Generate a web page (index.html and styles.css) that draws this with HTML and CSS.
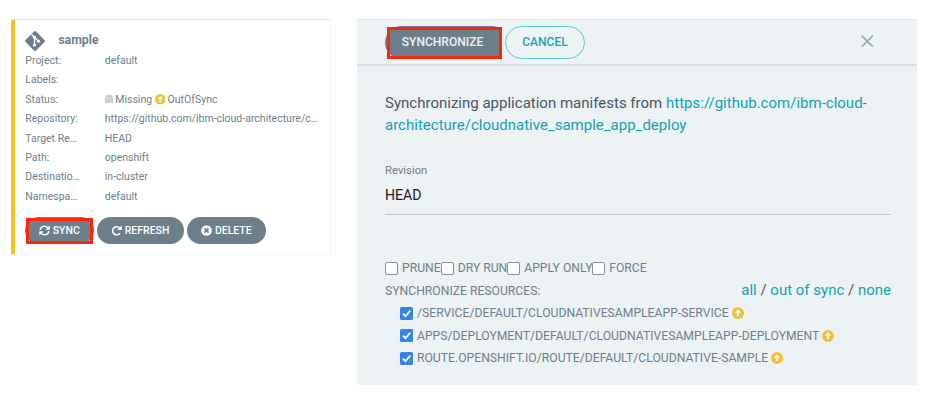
FILE: index.html
```html
<!DOCTYPE html>
<html lang="en">
<head>
<meta charset="utf-8">
<title>Applications</title>
<link rel="stylesheet" href="styles.css">
</head>
<body>
<svg class="defs" width="0" height="0">
  <symbol id="up" viewBox="0 0 16 16"><circle cx="8" cy="8" r="8" fill="#f4c030"/><path d="M8 3 L12.3 7.7 H9.5 V12.4 H6.5 V7.7 H3.7 Z" fill="#fff"/></symbol>
</svg>
<main class="page">
  <section class="card">
    <header class="card-head">
      <svg class="git" viewBox="0 0 20 20"><path d="M8.9.6a1.6 1.6 0 0 1 2.2 0l8.3 8.3a1.6 1.6 0 0 1 0 2.2l-8.3 8.3a1.6 1.6 0 0 1-2.2 0L.6 11.1a1.6 1.6 0 0 1 0-2.2z" fill="#6d7f8b"/><path d="M6.4 3.2 9.5 6.3V14M9.5 6.3 13.5 10.2" fill="none" stroke="#fff" stroke-width="1.3"/><circle cx="9.5" cy="6.3" r="1.6" fill="#fff"/><circle cx="9.5" cy="14" r="1.6" fill="#fff"/><circle cx="13.5" cy="10.2" r="1.6" fill="#fff"/></svg>
      <span class="name">sample</span>
    </header>
    <dl class="facts">
      <dt>Project:</dt><dd>default</dd>
      <dt>Labels:</dt><dd></dd>
      <dt>Status:</dt>
      <dd class="status"><svg class="ghost" viewBox="0 0 16 18"><path d="M0 8a8 8 0 0 1 16 0v10l-2.7-1.4-2.6 1.4L8 16.6 5.3 18l-2.6-1.4L0 18z" fill="#c5d1d9"/><circle cx="5.3" cy="7.5" r="1.2" fill="#fff"/><circle cx="10.7" cy="7.5" r="1.2" fill="#fff"/></svg><span class="missing">Missing</span><svg class="up"><use href="#up"/></svg><span class="oos">OutOfSync</span></dd>
      <dt>Repository:</dt><dd class="repo">https://github.com/ibm-cloud-architecture/c…</dd>
      <dt>Target Re…</dt><dd>HEAD</dd>
      <dt>Path:</dt><dd>openshift</dd>
      <dt>Destinatio…</dt><dd>in-cluster</dd>
      <dt>Namespa…</dt><dd>default</dd>
    </dl>
    <div class="actions">
      <button class="btn sync"><svg viewBox="0 0 16 16"><path d="M1.7 7.2A6.2 6.2 0 0 1 12.6 4M14.3 8.8A6.2 6.2 0 0 1 3.4 12" fill="none" stroke="#fff" stroke-width="2.1"/><path d="M15.6.6V6.8H9.4zM.4 15.4V9.2H6.6z" fill="#fff"/></svg>SYNC<i class="mark"></i></button>
      <button class="btn refresh"><svg viewBox="0 0 16 16"><path d="M12.7 4.4A5.9 5.9 0 1 0 13 11.9" fill="none" stroke="#fff" stroke-width="2.3"/><path d="M15.6.6V7.3H8.9z" fill="#fff"/></svg>REFRESH</button>
      <button class="btn delete"><svg viewBox="0 0 16 16"><circle cx="8" cy="8" r="7.8" fill="#fff"/><path d="M5 5l6 6M11 5l-6 6" stroke="#6d7f8b" stroke-width="2.4"/></svg>DELETE</button>
    </div>
  </section>

  <section class="panel">
    <header class="bar">
      <button class="main-btn">SYNCHRONIZE<i class="mark"></i></button>
      <button class="cancel">CANCEL</button>
      <svg class="close" viewBox="0 0 12 12"><path d="M.6.6 11.4 11.4M11.4.6.6 11.4" stroke="#95a7b5" stroke-width="1.4" fill="none"/></svg>
    </header>
    <div class="body">
      <p class="intro">Synchronizing application manifests from <a>https://github.com/ibm-cloud-<br>architecture/cloudnative_sample_app_deploy</a></p>
      <div class="field"><label>Revision</label><div class="value">HEAD</div></div>
      <div class="options">
        <label class="o1"><i class="box"></i>PRUNE</label><label class="o2"><i class="box"></i>DRY RUN</label><label class="o3"><i class="box"></i>APPLY ONLY</label><label class="o4"><i class="box"></i>FORCE</label>
      </div>
      <div class="res-head"><span>SYNCHRONIZE RESOURCES:</span><span class="links"><a>all</a> / <a>out of sync</a> / <a>none</a></span></div>
      <ul class="res">
        <li><svg class="check" viewBox="0 0 13 13"><rect width="13" height="13" rx="1.6" fill="#3584e4"/><path d="M3 6.6 5.5 9.1 10.3 3.7" stroke="#fff" stroke-width="1.8" fill="none"/></svg><span>/SERVICE/DEFAULT/CLOUDNATIVESAMPLEAPP-SERVICE</span><svg class="up"><use href="#up"/></svg></li>
        <li><svg class="check" viewBox="0 0 13 13"><rect width="13" height="13" rx="1.6" fill="#3584e4"/><path d="M3 6.6 5.5 9.1 10.3 3.7" stroke="#fff" stroke-width="1.8" fill="none"/></svg><span>APPS/DEPLOYMENT/DEFAULT/CLOUDNATIVESAMPLEAPP-DEPLOYMENT</span><svg class="up"><use href="#up"/></svg></li>
        <li><svg class="check" viewBox="0 0 13 13"><rect width="13" height="13" rx="1.6" fill="#3584e4"/><path d="M3 6.6 5.5 9.1 10.3 3.7" stroke="#fff" stroke-width="1.8" fill="none"/></svg><span>ROUTE.OPENSHIFT.IO/ROUTE/DEFAULT/CLOUDNATIVE-SAMPLE</span><svg class="up"><use href="#up"/></svg></li>
      </ul>
    </div>
  </section>
</main>
</body>
</html>
```
FILE: styles.css
```css
* { box-sizing: border-box; }
body { margin: 0; background: #fff; font-family: Roboto, "Liberation Sans", sans-serif; color: #6d7f8b; }
button { font-family: inherit; margin: 0; padding: 0; cursor: pointer; }
svg { display: block; flex: none; }
.defs { position: absolute; }
.page { display: flex; align-items: flex-start; gap: 26px; width: 936px; height: 404px; padding: 19px 0 0 10.5px; overflow: hidden; }

.card { width: 320.5px; height: 235.5px; border: 1px solid #f3f5f6; border-top-color: #dce6eb; border-left: 4px solid #f4c022; border-radius: 3px 1px 1px 3px; padding: 10.5px 0 0 10.8px; }
.card-head { display: flex; align-items: center; height: 20px; }
.git { width: 20px; height: 20px; }
.name { margin-left: 13px; font-size: 12.3px; font-weight: 700; line-height: 18px; margin-top: -1px; }
.facts { display: grid; grid-template-columns: 79.5px 1fr; grid-auto-rows: 19.4px; margin: 0.5px 0 0; font-size: 10.5px; line-height: 19.4px; white-space: nowrap; }
.facts dd { margin: 0; }
.status { display: flex; align-items: center; }
.ghost { width: 8px; height: 10px; margin-right: 2.5px; }
.status .up { width: 10.5px; height: 10.5px; margin: 0 2.5px 0 2.5px; }
.actions { display: flex; gap: 3px; margin-top: 10.5px; }
.btn { position: relative; display: flex; align-items: center; justify-content: center; gap: 2.5px; height: 27.5px; border: 0; border-radius: 14px; background: #6d7f8b; color: #fff; font-size: 10.5px; font-weight: 500; }
.btn svg { width: 11px; height: 11px; }
.sync { width: 68.5px; }
.refresh { width: 87px; }
.delete { width: 79.5px; }
.mark { position: absolute; border: 3px solid #fb270a; }
.sync .mark { left: 1px; top: 1px; width: 67px; height: 26.5px; }

.panel { width: 560px; height: 366px; background: #edf2f5; border-top: 1.5px solid #e4e7ea; }
.bar { display: flex; align-items: center; height: 46px; padding: 0 43.5px 0 28px; border-bottom: 2px solid #d8dee2; }
.main-btn { position: relative; width: 115px; height: 33px; border: 0; border-radius: 17px 7px 7px 17px; background: #6d7f8b; color: #edf2f5; font-size: 12.05px; font-weight: 500; }
.main-btn .mark { left: 2px; top: 1px; width: 115px; height: 32px; }
.cancel { width: 80px; height: 33px; margin-left: 5px; border: 1px solid #55c9d6; border-radius: 17px; background: transparent; color: #12a5b5; font-size: 12.05px; font-weight: 500; }
.close { width: 12.5px; height: 12.5px; margin-left: auto; margin-top: -2px; }
.body { padding: 27px 26px 0 28px; }
.intro { margin: 0; font-size: 15.02px; line-height: 21.5px; color: #495763; white-space: nowrap; }
a { color: #12a2b0; }
.field { margin-top: 25px; height: 53.5px; border-bottom: 1.5px solid #c5c6c9; }
.field label { display: block; font-size: 11.3px; line-height: 20px; }
.value { margin-top: 4px; font-size: 14.1px; line-height: 20px; color: #1b1d1f; }
.options { display: flex; margin-top: 42.5px; height: 22.5px; font-size: 12.18px; white-space: nowrap; }
.options label { display: flex; align-items: center; flex: none; }
.box { flex: none; width: 13px; height: 13px; margin-right: 4px; border: 1.5px solid #8f8f9d; border-radius: 2px; background: #fff; }
.o1 { width: 55.7px; }
.o2 { width: 66.5px; }
.o3 { width: 85px; }
.res-head { display: flex; justify-content: space-between; align-items: center; height: 22.5px; font-size: 12.18px; }
.links { font-size: 15px; color: #495763; margin-top: -2px; }
.res { list-style: none; margin: 0; padding: 0 0 0 15px; font-size: 12.18px; white-space: nowrap; }
.res li { display: flex; align-items: center; height: 22.5px; }
.check { width: 13px; height: 13px; margin-right: 4px; }
.res .up { width: 12px; height: 12px; margin-left: 3px; }
```
